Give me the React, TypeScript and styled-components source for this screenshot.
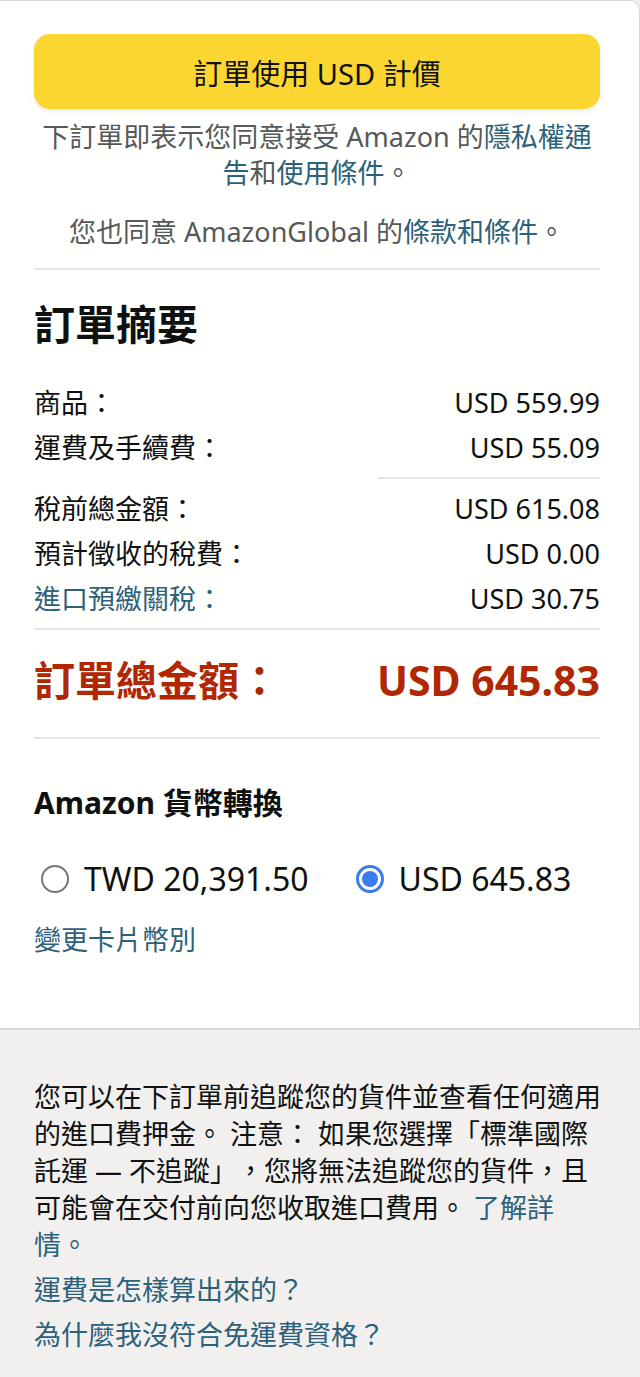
import React, { useState } from 'react';
import styled, { createGlobalStyle } from 'styled-components';

const GlobalStyle = createGlobalStyle`
  html, body {
    margin: 0;
    padding: 0;
    background: #f1f0ef;
  }
  body {
    font-family: 'Noto Sans', 'Noto Sans CJK TC', sans-serif;
    color: #0f1111;
    text-spacing-trim: space-all;
  }
`;

const Card = styled.div`
  background: #fffffe;
  border-top: 1px solid #d5d9d9;
  border-right: 1px solid #d5d9d9;
  border-top-right-radius: 10px;
  padding: 33px 39px 70px 34px;
`;

const PlaceButton = styled.button`
  display: flex;
  align-items: center;
  justify-content: center;
  width: 100%;
  height: 75px;
  border: none;
  border-radius: 16px;
  background: #fcd630;
  box-shadow: 0 2px 5px rgba(213, 217, 217, 0.5);
  font-family: inherit;
  font-size: 29px;
  color: #0f1111;
  cursor: pointer;
`;

const Notice = styled.p<{ $gap: number }>`
  margin: ${p => p.$gap}px 0 0;
  padding: 0 6px;
  text-align: center;
  font-size: 27px;
  line-height: 36px;
  color: #565959;
`;

const Link = styled.a`
  color: #2d6179;
  text-decoration: none;
  cursor: pointer;
`;

const Divider = styled.hr<{ $top: number; $bottom: number }>`
  margin: ${p => p.$top}px 0 ${p => p.$bottom}px;
  border: none;
  height: 2px;
  background: #e3e6e6;
`;

const ShortDivider = styled.hr`
  margin: 7px 0 7px auto;
  width: 222px;
  border: none;
  height: 2px;
  background: #e3e6e6;
`;

const Heading = styled.h2`
  margin: 0 0 32px;
  font-size: 41px;
  line-height: 48px;
  font-weight: 700;
`;

const Row = styled.div`
  display: flex;
  justify-content: space-between;
  align-items: center;
  font-size: 27px;
  line-height: 45px;
`;

const Label = styled.span<{ $link?: boolean }>`
  color: ${p => (p.$link ? '#2d6179' : '#0f1111')};
`;

const TotalRow = styled.div`
  display: flex;
  justify-content: space-between;
  align-items: center;
  font-size: 41px;
  line-height: 50px;
  font-weight: 700;
  color: #b12704;
`;

const SubHeading = styled.h3`
  margin: 0;
  font-size: 30px;
  line-height: 40px;
  font-weight: 700;
`;

const RadioGroup = styled.div`
  display: flex;
  align-items: center;
  gap: 47px;
  margin: 36px 0 0 7px;
`;

const RadioOption = styled.label`
  display: flex;
  align-items: center;
  gap: 15px;
  font-size: 32px;
  line-height: 40px;
  cursor: pointer;
`;

const RadioCircle = styled.span<{ $checked: boolean }>`
  box-sizing: border-box;
  width: 28px;
  height: 28px;
  border-radius: 50%;
  border: ${p => (p.$checked ? '3px solid #3b7bf0' : '2px solid #767676')};
  background: #fff;
  display: flex;
  align-items: center;
  justify-content: center;

  &::after {
    content: '';
    display: ${p => (p.$checked ? 'block' : 'none')};
    width: 16px;
    height: 16px;
    border-radius: 50%;
    background: #3b7bf0;
  }
`;

const ChangeLink = styled(Link)`
  display: block;
  margin-top: 23px;
  font-size: 27px;
  line-height: 36px;
`;

const InfoSection = styled.div`
  border-top: 2px solid #d9d9d9;
  background: #f1f0ef;
  padding: 48px 39px 40px 34px;
`;

const InfoText = styled.p`
  margin: 0;
  font-size: 27px;
  line-height: 37px;
  color: #0f1111;
`;

const InfoLink = styled(Link)`
  display: block;
  margin-top: 8px;
  font-size: 27px;
  line-height: 37px;
`;

const App: React.FC = () => {
  const [currency, setCurrency] = useState<'TWD' | 'USD'>('USD');

  return (
    <>
      <GlobalStyle />
      <Card>
        <PlaceButton>訂單使用 USD 計價</PlaceButton>
        <Notice $gap={10}>
          下訂單即表示您同意接受 Amazon 的<Link>隱私權通告</Link>和<Link>使用條件</Link>。
        </Notice>
        <Notice $gap={23}>
          您也同意 AmazonGlobal 的<Link>條款和條件</Link>。
        </Notice>
        <Divider $top={18} $bottom={30} />

        <Heading>訂單摘要</Heading>
        <Row>
          <Label>商品：</Label>
          <span>USD 559.99</span>
        </Row>
        <Row>
          <Label>運費及手續費：</Label>
          <span>USD 55.09</span>
        </Row>
        <ShortDivider />
        <Row>
          <Label>稅前總金額：</Label>
          <span>USD 615.08</span>
        </Row>
        <Row>
          <Label>預計徵收的稅費：</Label>
          <span>USD 0.00</span>
        </Row>
        <Row>
          <Label $link>進口預繳關稅：</Label>
          <span>USD 30.75</span>
        </Row>
        <Divider $top={7} $bottom={25} />
        <TotalRow>
          <span>訂單總金額：</span>
          <span>USD 645.83</span>
        </TotalRow>
        <Divider $top={32} $bottom={44} />

        <SubHeading>Amazon 貨幣轉換</SubHeading>
        <RadioGroup>
          <RadioOption onClick={() => setCurrency('TWD')}>
            <RadioCircle $checked={currency === 'TWD'} />
            TWD 20,391.50
          </RadioOption>
          <RadioOption onClick={() => setCurrency('USD')}>
            <RadioCircle $checked={currency === 'USD'} />
            USD 645.83
          </RadioOption>
        </RadioGroup>
        <ChangeLink>變更卡片幣別</ChangeLink>
      </Card>

      <InfoSection>
        <InfoText>
          您可以在下訂單前追蹤您的貨件並查看任何適用的進口費押金。 注意： 如果您選擇「標準國際託運 — 不追蹤」，您將無法追蹤您的貨件，且可能會在交付前向您收取進口費用。 <Link>了解詳情。</Link>
        </InfoText>
        <InfoLink>運費是怎樣算出來的？</InfoLink>
        <InfoLink>為什麼我沒符合免運費資格？</InfoLink>
      </InfoSection>
    </>
  );
};

export default App;
